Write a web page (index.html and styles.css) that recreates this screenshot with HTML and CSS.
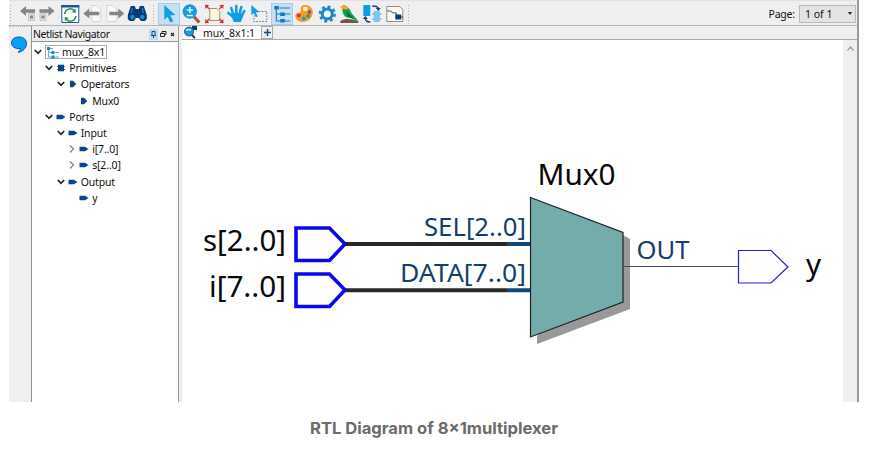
FILE: index.html
```html
<!DOCTYPE html>
<html lang="en">
<head>
<meta charset="utf-8">
<title>Netlist Viewer</title>
<link rel="stylesheet" href="styles.css">
</head>
<body>
<figure class="figure">
<div class="app">
  <header class="toolbar">
    <i class="handle first"></i>
    <svg class="tool narrow" viewBox="0 0 19 22"><path d="M2 8l6-5v3.300h9v3.400H8V13z" fill="#858585"/><path d="M10.500 10.500h6v7h-6z" fill="#ddd" stroke="#c5c5c5"/><path d="M12 12.500h3v3h-3z" fill="#888"/></svg>
    <svg class="tool narrow" viewBox="0 0 19 22"><path d="M17.500 8l-6-5v3.300h-9v3.400h9V13z" fill="#858585"/><path d="M3 10.500h6v7H3z" fill="#ddd" stroke="#c5c5c5"/><path d="M4.500 12.500h3v3h-3z" fill="#888"/></svg>
    <svg class="tool refresh" viewBox="0 0 22 22"><path d="M2.500 2.500h17v17h-17z" fill="#fff" stroke="#245b96"/><path d="M2 2h18v2.500H2z" fill="#1c5591"/><path d="M5.500 11a5.500 5.500 0 0 1 9.500-3.500M16.500 13a5.500 5.500 0 0 1-9.500 3.500" fill="none" stroke="#159447" stroke-width="1.500"/><path d="M16.500 6v4l-4-1zM5.500 18v-4l4 1z" fill="#159447"/></svg>
    <svg class="tool" viewBox="0 0 22 22"><path d="M10.500 2.500h5l4 4v12h-9z" fill="#f8f8f8" stroke="#d5d5d5"/><path d="M2 10.500l6-5v3.300h10v3.400H8v3.300z" fill="#858585"/></svg>
    <svg class="tool" viewBox="0 0 22 22"><path d="M2.500 2.500h6l4 4v12h-10z" fill="#f8f8f8" stroke="#d5d5d5"/><path d="M20 10.500l-6-5v3.300H5v3.400h9v3.300z" fill="#858585"/></svg>
    <svg class="tool" viewBox="0 0 22 22"><path d="M4.500 3h4l1 3h3l1-3h4l3 9v4l-2 2h-4l-2-3h-3l-2 3h-4l-2-2v-4z" fill="#063d78"/><circle cx="6" cy="14" r="2.200" fill="#1687d9"/><circle cx="16" cy="14" r="2.200" fill="#1687d9"/><path d="M6 5l-1 5M16 5l1 5" stroke="#4b83b6"/></svg>
    <i class="handle middle"></i>
    <svg class="tool active" viewBox="0 0 22 22"><path d="M6 2l11 10-5 .4 3 5.600-3 1.500-2.700-5.700L6 17z" fill="#159ce5"/></svg>
    <svg class="tool" viewBox="0 0 22 22"><path d="M13.500 13.500l5.500 6" stroke="#b7472e" stroke-width="3"/><circle cx="9.500" cy="8.500" r="7.200" fill="#149be3"/><path d="M6.500 7h6M9.500 4v6M6.500 12.500h6" stroke="#e9faff" stroke-width="1.400"/></svg>
    <svg class="tool" viewBox="0 0 22 22"><path d="M6.500 5.500h7l3 3v9h-10z" fill="#fff5dc" stroke="#999487"/><path d="M2 2l4 4M20 2l-4 4M2 20l4-4M20 20l-4-4" stroke="#d73b3b" stroke-width="1.400"/><path d="M2 2h4L2 6zM20 2h-4l4 4zM2 20h4l-4-4zM20 20h-4l4-4z" fill="#d9272e"/></svg>
    <svg class="tool" viewBox="0 0 22 22"><path d="M8 12L6 5M11 11V3M14 12l2-8M16 14l3-6M8 14l-5-4" stroke="#129be5" stroke-width="2.600" stroke-linecap="round"/><path d="M5 11l3-1h8l1.500 4-2 5h-7z" fill="#129be5"/></svg>
    <svg class="tool" viewBox="0 0 22 22"><path d="M7.500 8.500h11v10h-13v-6" fill="none" stroke="#526f89" stroke-dasharray="1.500 1.500"/><path d="M3 2l8 7-3.500.5 2 4-2 .8-2-4L3 12z" fill="#159ce5"/></svg>
    <svg class="tool active" viewBox="0 0 22 22"><path d="M5 5v13h5M5 11h5M8 5h11M13 11h6M13 18h6" fill="none" stroke="#39739f" stroke-width="1.100"/><path d="M3 3h4.500v3.500H3zM9 9.500h4.500V13H9zM9 16h4.500v3.500H9z" fill="#087bc7"/></svg>
    <svg class="tool" viewBox="0 0 22 22"><path d="M12 2c5 0 8 4 7.500 8-.5 5-5 9-10 9C5 19 2 16 2 13c0-2 1-3 3-3s3-2 2.500-4S9 2 12 2z" fill="#f59b22"/><circle cx="12" cy="6" r="2.300" fill="#fff4dd"/><circle cx="5.500" cy="12.500" r="2" fill="#e62250"/><circle cx="10.500" cy="15.500" r="2" fill="#169ddd"/><circle cx="15" cy="13" r="2" fill="#35a44d"/><circle cx="16" cy="9" r="1.700" fill="#7949a5"/></svg>
    <svg class="tool" viewBox="0 0 22 22"><circle cx="11" cy="11" r="7.300" fill="none" stroke="#1588d0" stroke-width="2.600" stroke-dasharray="2.870 2.870"/><circle cx="11" cy="11" r="5" fill="#fff7e4" stroke="#1588d0" stroke-width="3"/></svg>
    <svg class="tool" viewBox="0 0 22 22"><path d="M2 18c5-3 11-2 18 0v2H2z" fill="#76534e"/><path d="M4 5c5-3 8 1 9 5l7 8-8-3C6 15 4 11 4 5z" fill="#0ca34a"/><path d="M8 8l8 8-7-3z" fill="#076b3a"/><path d="M2 5c1-4 7-4 8 1-3 1-5 0-8-1z" fill="#f5a52a"/></svg>
    <svg class="tool" viewBox="0 0 22 22"><path d="M2 2h7v11H2z" fill="#109be4"/><path d="M12.500 8h6v11h-6z" fill="#7dc5ef"/><path d="M11 11h9M11 16h9" stroke="#7dc5ef" stroke-width="2"/><path d="M11 3c4 0 6 1 6 3M4 15c0 3 2 4 5 4" fill="none" stroke="#123d6b" stroke-width="1.400"/><path d="M14.500 5h5L17 8zM1.500 16h5L4 13z" fill="#123d6b"/></svg>
    <svg class="tool" viewBox="0 0 22 22"><path d="M2.500 3.500h13l3 3v12h-16z" fill="#fffaf0" stroke="#8e8c87"/><path d="M3 8h3l3 2h3v2M17 14h2" fill="none" stroke="#245272"/><path d="M11 11.500h6v5h-6z" fill="#073b77"/></svg>
    <i class="handle last"></i>
    <span class="page-label">Page:</span>
    <div class="page-select"><span>1 of 1</span><i></i></div>
  </header>
  <div class="body">
    <aside class="rail"><svg width="18" height="18" viewBox="0 0 18 18"><path d="M9 1c5 0 7.500 3 7.500 6.500C16.500 12 13 15.500 8 16.500c2-1.700 2.500-2.500 2-4C5 13 1.500 10.500 1.500 7S4 1 9 1z" fill="#08a2f3" stroke="#1552a1"/></svg></aside>
    <section class="navigator">
      <div class="nav-head"><span>Netlist Navigator</span>
        <svg width="28" height="11" viewBox="0 0 28 11"><path d="M0 0h9v11H0z" fill="#b8dcf5"/><path d="M3 2.500h3v4H3zM2 6.500h5M4.500 6.500V9" fill="none" stroke="#254766"/><path d="M11.500 4.500h4v3h-4zM13 4V2.500h4v3h-1" fill="none" stroke="#222"/><path d="M22 4l3 3M25 4l-3 3" stroke="#222" stroke-width="1.200"/></svg>
      </div>
      <svg class="defs" width="0" height="0"><defs>
        <symbol id="open" viewBox="0 0 8 8"><path d="M.8 2l3.200 3.300L7.200 2" fill="none" stroke="#222" stroke-width="1.700"/></symbol>
        <symbol id="closed" viewBox="0 0 8 8"><path d="M2 .5l3.500 3.500L2 7.500" fill="none" stroke="#888" stroke-width="1.300"/></symbol>
        <symbol id="pin" viewBox="0 0 10 8"><path d="M.5 1.800h5.500l3.500 2.200L6 6.200H.5z" fill="#0b4684"/></symbol>
        <symbol id="gate" viewBox="0 0 10 8"><path d="M2 .8h3L8.300 4 5 7.200H2z" fill="#0b4684"/></symbol>
        <symbol id="chip" viewBox="0 0 10 8"><path d="M2 .7h6v6.600H2z" fill="#0b4684"/><path d="M1.300 2.500h7.400M1.300 5.500h7.400" stroke="#0b4684"/></symbol>
      </defs></svg>
      <ul class="tree">
        <li class="l0"><svg class="arrow"><use href="#open"/></svg><span class="selected"><svg width="13" height="13" viewBox="0 0 13 13"><path d="M2.500 2v9H6M2.500 6.500H6M4 2.500h3M9 6.500h4M9 11h4" fill="none" stroke="#5bacd9"/><path d="M1 1h3v3H1zM5.500 5h3v3h-3zM5.500 9.500h3v3h-3z" fill="#0789d5"/></svg><b>mux_8x1</b></span></li>
        <li class="l1"><svg class="arrow"><use href="#open"/></svg><svg class="node"><use href="#chip"/></svg>Primitives</li>
        <li class="l2"><svg class="arrow"><use href="#open"/></svg><svg class="node"><use href="#gate"/></svg>Operators</li>
        <li class="l3"><i class="arrow"></i><svg class="node"><use href="#gate"/></svg>Mux0</li>
        <li class="l1"><svg class="arrow"><use href="#open"/></svg><svg class="node"><use href="#pin"/></svg>Ports</li>
        <li class="l2"><svg class="arrow"><use href="#open"/></svg><svg class="node"><use href="#pin"/></svg>Input</li>
        <li class="l3"><svg class="arrow"><use href="#closed"/></svg><svg class="node"><use href="#pin"/></svg>i[7..0]</li>
        <li class="l3"><svg class="arrow"><use href="#closed"/></svg><svg class="node"><use href="#pin"/></svg>s[2..0]</li>
        <li class="l2"><svg class="arrow"><use href="#open"/></svg><svg class="node"><use href="#pin"/></svg>Output</li>
        <li class="l3"><i class="arrow"></i><svg class="node"><use href="#pin"/></svg>y</li>
      </ul>
    </section>
    <main class="viewer">
      <div class="tabs"><div class="tab"><svg width="16" height="13" viewBox="0 0 16 13"><path d="M9 0h5v4H9z" fill="#063d78"/><path d="M8 8l4 4" stroke="#173f68" stroke-width="2"/><circle cx="6" cy="5.500" r="4.500" fill="#2196d9" stroke="#185c91"/><path d="M3 4.500q3-2 5 0" fill="none" stroke="#dff4ff" stroke-width="1.500"/></svg><span>mux_8x1:1</span></div><div class="add"><svg width="7" height="7" viewBox="0 0 7 7"><path d="M3.500 0v7M0 3.500h7" stroke="#174c7c" stroke-width="1.500"/></svg></div></div>
      <div class="workspace">
        <svg class="diagram" width="661" height="362" viewBox="182 40 661 362">
          <path d="M537 336v8l93-35v-70l-7-4z" fill="#999"/>
          <path d="M345 244h162M345 290.300h162" stroke="#292929" stroke-width="4"/>
          <path d="M507 244h23M507 290.300h23" stroke="#104a7b" stroke-width="4"/>
          <path d="M530.500 197.500l92.500 35v69.500l-92.500 35z" fill="#73acab" stroke="#222" stroke-width="1.200"/>
          <path d="M624 266.500h114" stroke="#4c4c68" stroke-width="1.200"/>
          <path d="M296 228h33.500l15.500 16-15.500 16.500H296zM296 274h33.500l15.500 16-15.500 16.500H296z" fill="#fff" stroke="#0808ed" stroke-width="3.600"/>
          <path d="M738.500 250.500H771l17 16.500-17 16H738.500z" fill="#fff" stroke="#2020d8" stroke-width="1.200"/>
          <g class="port">
            <text x="203" y="251" textLength="83" lengthAdjust="spacingAndGlyphs">s[2..0]</text><text x="209" y="297" textLength="77" lengthAdjust="spacingAndGlyphs">i[7..0]</text>
            <text x="537.500" y="185" textLength="78" lengthAdjust="spacingAndGlyphs">Mux0</text><text x="806" y="275" textLength="15" lengthAdjust="spacingAndGlyphs">y</text>
          </g>
          <g class="pin">
            <text x="424" y="236" textLength="102" lengthAdjust="spacingAndGlyphs">SEL[2..0]</text><text x="400" y="282" textLength="126" lengthAdjust="spacingAndGlyphs">DATA[7..0]</text><text x="636.500" y="259" textLength="53" lengthAdjust="spacingAndGlyphs">OUT</text>
          </g>
        </svg>
        <div class="scrollbar"><svg width="7" height="5" viewBox="0 0 7 5"><path d="M.5 4.500l3-3.500 3 3.500" fill="none" stroke="#999" stroke-width="1.200"/></svg></div>
      </div>
    </main>
  </div>
</div>
<figcaption><svg class="caption" width="250" height="22"><text x="1" y="16" textLength="248" lengthAdjust="spacingAndGlyphs">RTL Diagram of 8×1multiplexer</text></svg></figcaption>
</figure>
</body>
</html>
```
FILE: styles.css
```css
* { box-sizing: border-box; }
body { margin: 0; background: #fff; font-family: "Noto Sans", sans-serif; font-size: 11px; color: #111; }
.figure { margin: 0; width: 885px; height: 453px; overflow: hidden; }
.app { width: 850px; height: 402px; margin-left: 9px; display: flex; flex-direction: column; background: #efefef; border-right: 2px solid #999; }
.toolbar { height: 26px; flex: none; display: flex; align-items: center; padding-top: 1px; border-top: 1px solid #e2e2e2; border-bottom: 1px solid #b5b5b5; }
.handle { width: 3px; height: 20px; flex: none; background: radial-gradient(circle, #b3b3b3 0.8px, transparent 1px) 0 0 / 3px 3px; }
.first { margin: 0 5.500px 0 0; }
.middle { margin: 0 2.800px; }
.last { margin-left: 1px; }
.tool { width: 22.600px; height: 22px; flex: none; }
.narrow { width: 19px; }
.refresh { margin-left: 3.200px; }
.active { background: #c4e0f5; outline: 1px solid #a5cdea; outline-offset: -1px; }
.page-label { margin-left: auto; width: 30.500px; font-size: 10.500px; letter-spacing: -0.200px; }
.page-select { width: 57px; height: 18px; display: flex; align-items: center; justify-content: space-between; padding: 0 3px 0 5px; border: 1px solid #b9b9b9; background: #e3e3e3; margin-right: 1px; font-size: 10.500px; }
.page-select i { border: 2.500px solid transparent; border-top: 3px solid #222; border-bottom: 0; }
.body { flex: 1; display: flex; min-height: 0; }
.rail { width: 22px; padding: 9px 0 0 1px; border-top: 1px dotted #bbb; }
.navigator { width: 148px; background: #fff; border-left: 1px solid #929292; border-right: 1px solid #999; }
.nav-head { height: 16px; display: flex; align-items: center; justify-content: space-between; padding: 1px 1px 0; background: #ededed; border-bottom: 1px solid #999; font-size: 10.500px; letter-spacing: -0.400px; white-space: nowrap; }
.defs { display: block; }
.tree { list-style: none; margin: 0; padding: 2px 0 0; font-size: 10.500px; letter-spacing: -0.150px; }
.tree li { height: 16.200px; display: flex; align-items: center; white-space: nowrap; }
.l0 { padding-left: 2px; }
.l1 { padding-left: 13px; }
.l2 { padding-left: 24.500px; }
.l3 { padding-left: 36px; }
.arrow { width: 8px; height: 8px; flex: none; margin-right: 3px; }
.node { width: 10px; height: 8px; flex: none; margin-right: 3.200px; }
.selected { display: flex; align-items: center; height: 14px; width: 62px; border: 1px solid #aaa; }
.selected b { font-weight: 400; margin-left: 3px; }
.viewer { flex: 1; min-width: 0; padding-left: 3px; display: flex; flex-direction: column; }
.tabs { height: 14px; flex: none; display: flex; border-bottom: 1px solid #aaa; }
.tab { width: 78px; display: flex; gap: 4px; align-items: center; background: #fff; margin-left: 1px; font-size: 10.500px; letter-spacing: -0.100px; }
.add { width: 12px; height: 13px; border: 1px solid #aaa; display: flex; align-items: center; justify-content: center; }
.workspace { flex: 1; display: flex; background: #fff; }
.diagram { display: block; flex: none; }
.port { font-size: 29px; fill: #080808; }
.pin { font-size: 24.700px; fill: #123f6d; }
.scrollbar { width: 14px; background: #efefef; display: flex; justify-content: center; padding-top: 6px; }
figcaption { width: 850px; margin: 16px 0 0 9px; display: flex; justify-content: center; }
.caption { font: 700 16.500px "Inter", sans-serif; fill: #6b6b6b; }
```
